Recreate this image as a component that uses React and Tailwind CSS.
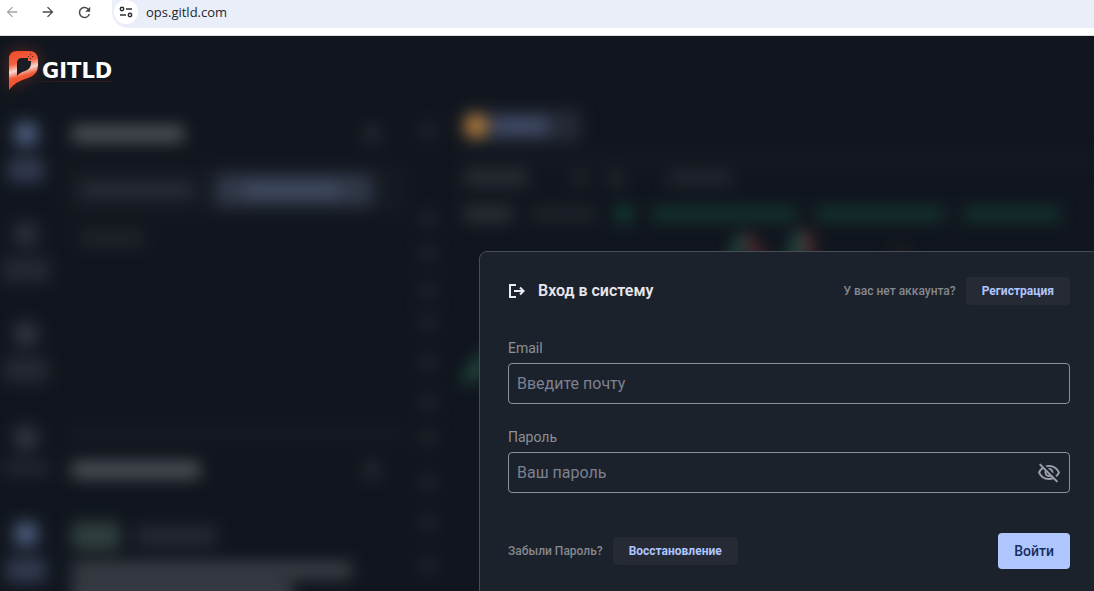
import React, { useState } from 'react';
import { MdArrowBack, MdArrowForward, MdRefresh, MdOutlineVisibilityOff, MdOutlineVisibility } from 'react-icons/md';

// colours of the blurred blocks are written out in full so that tailwind picks them up
const railItems = [
	{ icon: 'bg-[#4b5b7b]', label: 'bg-[#323b50] w-9 h-6', gap: 'mb-10' },
	{ icon: 'bg-[#2b2f38]', label: 'bg-[#252932] w-12 h-6', gap: 'mb-10' },
	{ icon: 'bg-[#30343d]', label: 'bg-[#262a33] w-11 h-6', gap: 'mb-11' },
	{ icon: 'bg-[#30343d]', label: 'bg-[#252932] w-12 h-3', gap: 'mb-12' },
	{ icon: 'bg-[#4b5b7b]', label: 'bg-[#323b50] w-10 h-6', gap: '' },
];

const toolItems = ['mb-18', 'mb-5', 'mb-5', 'mb-4', 'mb-6', 'mb-6', 'mb-5', 'mb-7', 'mb-6', 'mb-7', 'mb-6'];

const BrowserBar = () => (
	<header className="flex items-start w-full h-9 bg-white border-b border-[#dadce0]">
		<div className="flex items-center w-28 h-6 text-[#45484c]">
			<button type="button" aria-label="Back" className="ml-1 mr-5 text-[#a4a6a9]">
				<MdArrowBack size={16} />
			</button>
			<button type="button" aria-label="Forward" className="mr-5">
				<MdArrowForward size={16} />
			</button>
			<button type="button" aria-label="Reload">
				<MdRefresh size={17} />
			</button>
		</div>
		<div className="flex items-center flex-1 gap-2 h-7 pb-1 pl-0.5 bg-[#e9eef9] rounded-bl-2xl">
			<button type="button" aria-label="Site information" className="flex items-center justify-center w-6 h-6 bg-white rounded-full">
				<SiteInfoIcon />
			</button>
			<input
				aria-label="Address"
				defaultValue="ops.gitld.com"
				className="flex-1 h-6 bg-transparent text-[13px] text-[#24272b] font-['Open_Sans',sans-serif] outline-none"
			/>
		</div>
	</header>
);

const SiteInfoIcon = () => (
	<svg width="14" height="12" viewBox="0 0 14 12" fill="none" stroke="#303236" strokeWidth="1.5">
		<circle cx="3" cy="3" r="1.7" />
		<path d="M7 3h6M1 9h6" />
		<circle cx="11" cy="9" r="1.7" />
	</svg>
);

const Logo = () => (
	<div className="relative flex items-center gap-1 px-2 pt-3">
		<svg width="30" height="42" viewBox="0 0 30 42" className="drop-shadow-[0_0_8px_rgba(240,90,50,0.3)]">
			<defs>
				<linearGradient id="flame" x1="0.3" y1="0" x2="0.5" y2="1">
					<stop offset="0" stopColor="#ee4c2b" />
					<stop offset="0.3" stopColor="#f2603f" />
					<stop offset="0.48" stopColor="#f7d9d2" />
					<stop offset="0.65" stopColor="#f15a38" />
					<stop offset="1" stopColor="#f04a24" />
				</linearGradient>
			</defs>
			<path
				d="M9 3H21Q30 3 30 12V17Q30 27 20 30Q8 33 1 42V11Q1 3 9 3Z"
				fill="url(#flame)"
			/>
			<path d="M14 10Q9 10 9 15V28Q11 25 17 23Q23 21 23 15V13H20V10Z" fill="#1b1d24" />
			<path d="M20 8h1v1h-1zM22 6h1v1h-1zM22 10h1v1h-1zM24 8h1v1h-1z" fill="#5a1f16" />
		</svg>
		<span className="mt-1 text-[21px] leading-5 font-bold text-white border-b border-[#33191b] font-['DejaVu_Sans',sans-serif]">
			GITLD
		</span>
	</div>
);

// left navigation, icon with its caption below
const Rail = () => (
	<div className="flex flex-col items-center w-[52px] shrink-0">
		{railItems.map((item, i) => (
			<div key={i} className={`flex flex-col items-center gap-3 ${item.gap}`}>
				<div className={`w-6 h-6 rounded-md ${item.icon}`} />
				<div className={`rounded-sm ${item.label}`} />
			</div>
		))}
	</div>
);

const MarketPanel = () => (
	<div className="w-[336px] shrink-0 ml-4">
		<div className="flex items-center justify-between w-[308px] h-6 ml-1">
			<div className="w-28 h-4 bg-[#50535a]" />
			<div className="w-4 h-4 bg-[#262a32]" />
		</div>
		<div className="flex items-center h-12 mt-5 bg-[#161a22]">
			<div className="w-28 h-3 ml-3 bg-[#2c3038]" />
			<div className="flex items-center w-[156px] h-8 ml-6 bg-[#303848]">
				<div className="w-24 h-3 ml-7 bg-[#434e66]" />
			</div>
		</div>
		<div className="w-16 h-4 ml-3 mt-4 bg-[#20242b]" />
		<div className="h-2 mt-[184px] bg-[#191e27]" />
		<div className="flex items-center justify-between w-[308px] h-6 ml-1 mt-5">
			<div className="w-32 h-4 bg-[#50535a]" />
			<div className="w-4 h-4 bg-[#262a32]" />
		</div>
		<div className="flex items-center gap-4 mt-10 ml-1">
			<div className="w-12 h-7 bg-[#30403f]" />
			<div className="w-20 h-5 bg-[#252932]" />
		</div>
		<div className="w-[280px] h-4 mt-3 ml-1 bg-[#3d4048]" />
		<div className="w-[220px] h-5 mt-1 ml-1 bg-[#3d4048]" />
	</div>
);

const ChartPanel = () => (
	<div className="flex-1 ml-5">
		<div className="flex items-center w-[116px] h-8 -mt-3 bg-[#252a36]">
			<div className="w-6 h-6 bg-[#b37c39] rounded-full" />
			<div className="w-14 h-4 ml-1 bg-[#434f6c]" />
		</div>
		<div className="h-1 mt-4 bg-[#1b2029]" />
		<div className="flex items-center gap-11 h-4 mt-2">
			<div className="w-16 h-4 bg-[#2a2d34]" />
			<div className="flex gap-5">
				<div className="w-4 h-4 bg-[#1f232a]" />
				<div className="w-4 h-4 bg-[#22262d]" />
			</div>
			<div className="w-16 h-3 bg-[#262a32]" />
		</div>
		<div className="flex items-center gap-5 h-4 mt-5">
			<div className="w-12 h-4 bg-[#2c2f36]" />
			<div className="w-16 h-3 bg-[#22252c]" />
			<div className="w-4 h-4 bg-[#124238]" />
			<div className="w-36 h-3 bg-[#133a34]" />
			<div className="w-32 h-3 bg-[#133a34]" />
			<div className="w-24 h-3 bg-[#133a34]" />
		</div>
		<Candles />
	</div>
);

const Candles = () => (
	<svg width="460" height="180" viewBox="0 0 460 180" className="overflow-visible" strokeWidth="8">
		<path d="M2 160L22 132" stroke="#1f5f4f" />
		<path d="M12 156L22 144" stroke="#604332" strokeWidth="3" />
		<path d="M268 44L278 14M326 44L336 10" stroke="#226350" />
		<path d="M282 14L300 44M342 10L346 44" stroke="#6e3036" />
		<path d="M430 34h15" stroke="#302326" />
	</svg>
);

const Backdrop = () => (
	<div aria-hidden="true" className="flex pt-4 blur-sm">
		<Rail />
		<MarketPanel />
		<div className="flex flex-col items-center w-8 shrink-0 ml-2">
			{toolItems.map((gap, i) => (
				<div key={i} className={`w-4 h-4 shrink-0 bg-[#1f232b] ${gap}`} />
			))}
		</div>
		<ChartPanel />
	</div>
);

const Field = ({ id, label, children, ...rest }) => (
	<div>
		<label htmlFor={id} className="block mb-[5px] text-sm leading-5 text-[#8d9096]">
			{label}
		</label>
		<div className="flex items-center h-[41px] border border-[#8b9098] rounded">
			<input
				id={id}
				className="flex-1 min-w-0 h-full px-2 text-base text-white bg-transparent outline-none placeholder:text-[#7c8191]"
				{...rest}
			/>
			{children}
		</div>
	</div>
);

const LoginCard = () => {
	const [visible, setVisible] = useState(false);

	return (
		<form
			onSubmit={(e) => e.preventDefault()}
			className="flex-1 -mr-[5px] px-7 pt-[25px] pb-7 bg-[#1c222b] border border-[#484c53] rounded-lg"
		>
			<div className="flex items-center justify-between h-7">
				<h1 className="flex items-center gap-3 text-base font-semibold text-[#e6e6ec]">
					<svg width="18" height="18" viewBox="0 0 18 18" fill="none" stroke="#ececf0" strokeWidth="2">
						<path d="M8 3H2v12h6M6 9h9" />
						<path d="M12 5.5L15.5 9L12 12.5" />
					</svg>
					Вход в систему
				</h1>
				<div className="flex items-center gap-2.5">
					<span className="text-xs font-medium text-[#858990]">У вас нет аккаунта?</span>
					<a href="#register" className="px-4 text-xs font-bold leading-7 text-[#b0c6ff] bg-[#252a35] rounded">
						Регистрация
					</a>
				</div>
			</div>

			<div className="flex flex-col gap-[23px] mt-[33px]">
				<Field id="email" label="Email" type="email" placeholder="Введите почту" />
				<Field id="password" label="Пароль" type={visible ? 'text' : 'password'} placeholder="Ваш пароль">
					<button
						type="button"
						aria-label="Показать пароль"
						className="mr-2 text-[#9a9eaa]"
						onClick={() => setVisible(!visible)}
					>
						{visible ? <MdOutlineVisibility size={24} /> : <MdOutlineVisibilityOff size={24} />}
					</button>
				</Field>
			</div>

			<div className="flex items-center justify-between mt-10">
				<div className="flex items-center gap-2.5">
					<span className="text-xs font-medium text-[#858990]">Забыли Пароль?</span>
					<a href="#restore" className="px-4 text-xs font-bold leading-7 text-[#b0c6ff] bg-[#252a35] rounded">
						Восстановление
					</a>
				</div>
				<button type="submit" className="h-9 px-4 text-sm font-medium text-[#152e60] bg-[#b0c6ff] rounded">
					Войти
				</button>
			</div>
		</form>
	);
};

const App = () => (
	<div className="flex flex-col h-screen overflow-hidden bg-[#11161e] font-[Roboto,sans-serif]">
		<BrowserBar />
		<main className="relative flex-1 overflow-hidden">
			<Logo />
			<div className="pt-4">
				<Backdrop />
			</div>
			{/* login window lies over the blurred terminal */}
			<div className="absolute inset-0 flex items-start pl-[479px] pt-[215px]">
				<LoginCard />
			</div>
		</main>
	</div>
);

export default App;
